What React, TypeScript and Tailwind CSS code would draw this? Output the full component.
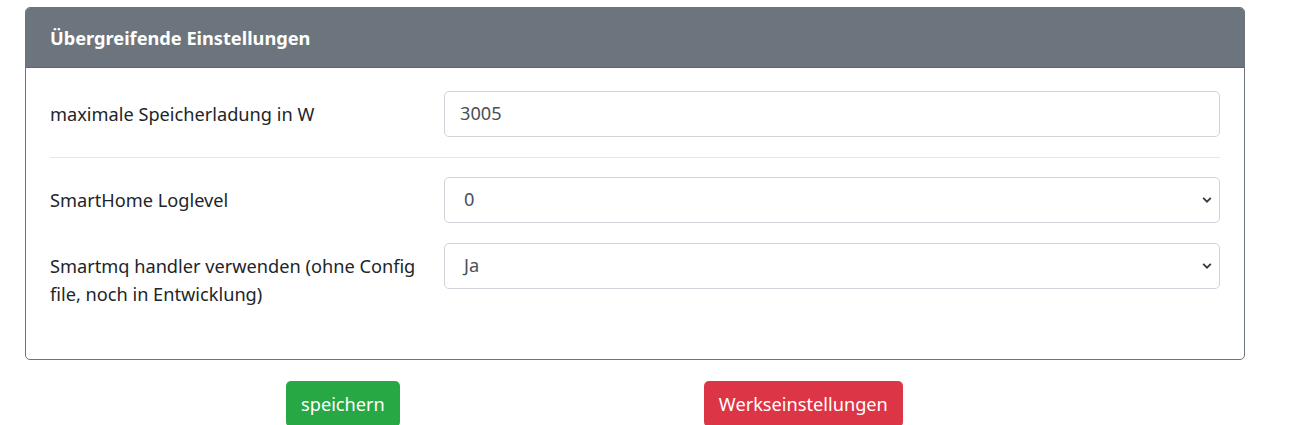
import React from 'react';

const font = { fontFamily: '"Segoe UI", "Noto Sans", "Open Sans", sans-serif' };

function Chevron() {
  return (
    <svg width="10" height="12" viewBox="0 0 4 5" className="absolute right-[7px] top-1/2 -translate-y-1/2">
      <path d="M0.4 1.6 L2 3.2 L3.6 1.6" fill="none" stroke="#343a40" strokeWidth="0.75" />
    </svg>
  );
}

function SelectBox({ value }: { value: string }) {
  return (
    <div className="relative flex-1 h-[46px] border border-[#ced4da] rounded-[5px] bg-white flex items-center pl-[19px] text-[#495057]">
      <span>{value}</span>
      <Chevron />
    </div>
  );
}

export default function App() {
  return (
    <div className="pt-[7px] pl-[25px] text-[18.2px] text-[#212529] bg-white min-h-[425px]" style={font}>
      <div className="w-[1220px] border border-[#6c757d] rounded-[5px] overflow-hidden">
        <div className="h-[60px] bg-[#6c757d] border-b border-[#5f666d] px-[24px] pt-[2px] flex items-center">
          <span className="text-white font-bold">Übergreifende Einstellungen</span>
        </div>
        <div className="px-[24px] pt-[23px] pb-[41px]">
          <div className="flex items-start">
            <label className="w-[394px] pt-[9px] pb-[9px] leading-[28.8px]">maximale Speicherladung in W</label>
            <div className="flex-1 h-[46px] border border-[#ced4da] rounded-[5px] flex items-center pl-[15px] text-[#495057]">
              3005
            </div>
          </div>
          <div className="border-t border-[#e6e6e6] mt-[19px] mb-[19px]" />
          <div className="flex items-start mb-[19px]">
            <label className="w-[394px] pt-[9px] pb-[9px] leading-[28.8px]">SmartHome Loglevel</label>
            <SelectBox value="0" />
          </div>
          <div className="flex items-start">
            <label className="w-[394px] pt-[9px] pb-[9px] leading-[28.8px]">
              Smartmq handler verwenden (ohne Config file, noch in Entwicklung)
            </label>
            <SelectBox value="Ja" />
          </div>
        </div>
      </div>
      <div className="flex mt-[21px]">
        <button className="ml-[261px] h-[46px] px-[15px] bg-[#28a745] text-white rounded-[5px] leading-[28.8px]">
          speichern
        </button>
        <button className="ml-[304px] h-[46px] px-[15px] bg-[#dc3545] text-white rounded-[5px] leading-[28.8px]">
          Werkseinstellungen
        </button>
      </div>
    </div>
  );
}
